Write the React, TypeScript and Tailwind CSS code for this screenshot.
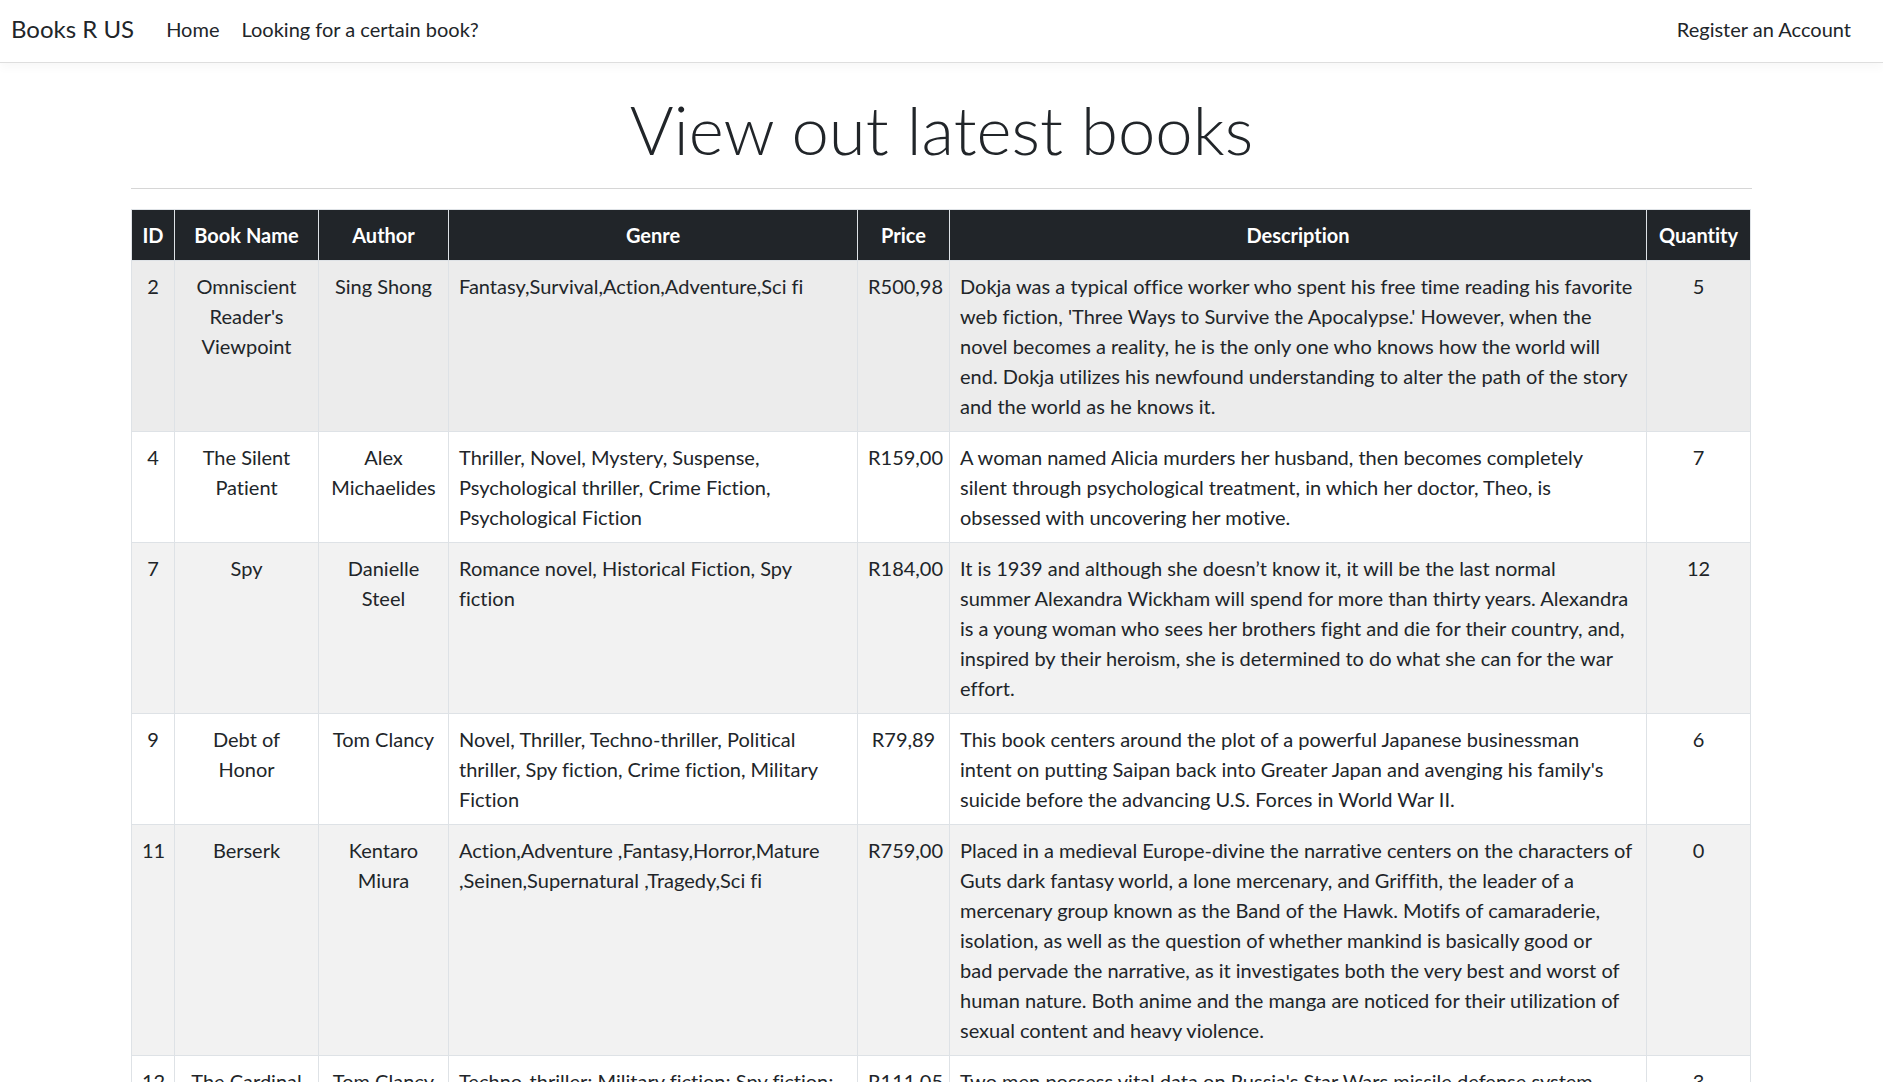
import React from "react";

interface Book {
  id: number;
  name: string[];
  author: string[];
  genre: string[];
  price: string;
  description: string[];
  quantity: number;
}

const books: Book[] = [
  {
    id: 2,
    name: ["Omniscient", "Reader's", "Viewpoint"],
    author: ["Sing Shong"],
    genre: ["Fantasy,Survival,Action,Adventure,Sci fi"],
    price: "R500,98",
    description: [
      "Dokja was a typical office worker who spent his free time reading his favorite",
      "web fiction, 'Three Ways to Survive the Apocalypse.' However, when the",
      "novel becomes a reality, he is the only one who knows how the world will",
      "end. Dokja utilizes his newfound understanding to alter the path of the story",
      "and the world as he knows it.",
    ],
    quantity: 5,
  },
  {
    id: 4,
    name: ["The Silent", "Patient"],
    author: ["Alex", "Michaelides"],
    genre: ["Thriller, Novel, Mystery, Suspense,", "Psychological thriller, Crime Fiction,", "Psychological Fiction"],
    price: "R159,00",
    description: [
      "A woman named Alicia murders her husband, then becomes completely",
      "silent through psychological treatment, in which her doctor, Theo, is",
      "obsessed with uncovering her motive.",
    ],
    quantity: 7,
  },
  {
    id: 7,
    name: ["Spy"],
    author: ["Danielle", "Steel"],
    genre: ["Romance novel, Historical Fiction, Spy", "fiction"],
    price: "R184,00",
    description: [
      "It is 1939 and although she doesn\u2019t know it, it will be the last normal",
      "summer Alexandra Wickham will spend for more than thirty years. Alexandra",
      "is a young woman who sees her brothers fight and die for their country, and,",
      "inspired by their heroism, she is determined to do what she can for the war",
      "effort.",
    ],
    quantity: 12,
  },
  {
    id: 9,
    name: ["Debt of", "Honor"],
    author: ["Tom Clancy"],
    genre: ["Novel, Thriller, Techno-thriller, Political", "thriller, Spy fiction, Crime fiction, Military", "Fiction"],
    price: "R79,89",
    description: [
      "This book centers around the plot of a powerful Japanese businessman",
      "intent on putting Saipan back into Greater Japan and avenging his family's",
      "suicide before the advancing U.S. Forces in World War II.",
    ],
    quantity: 6,
  },
  {
    id: 11,
    name: ["Berserk"],
    author: ["Kentaro", "Miura"],
    genre: ["Action,Adventure ,Fantasy,Horror,Mature", ",Seinen,Supernatural ,Tragedy,Sci fi"],
    price: "R759,00",
    description: [
      "Placed in a medieval Europe-divine the narrative centers on the characters of",
      "Guts dark fantasy world, a lone mercenary, and Griffith, the leader of a",
      "mercenary group known as the Band of the Hawk. Motifs of camaraderie,",
      "isolation, as well as the question of whether mankind is basically good or",
      "bad pervade the narrative, as it investigates both the very best and worst of",
      "human nature. Both anime and the manga are noticed for their utilization of",
      "sexual content and heavy violence.",
    ],
    quantity: 0,
  },
  {
    id: 12,
    name: ["The Cardinal", "of the", "Kremlin"],
    author: ["Tom Clancy"],
    genre: ["Techno-thriller; Military fiction; Spy fiction;", "Political thriller"],
    price: "R111,05",
    description: [
      "Two men possess vital data on Russia's Star Wars missile defense system,",
      "and the CIA must get them out before the KGB closes in.",
    ],
    quantity: 3,
  },
];

function Lines({ lines }: { lines: string[] }) {
  return (
    <>
      {lines.map((l, i) => (
        <span key={i} className="block whitespace-nowrap">
          {l}
        </span>
      ))}
    </>
  );
}

export default function App() {
  const td = "border border-[#dee2e6] px-[10px] py-[10px] align-top";
  const th = "border border-[#dee2e6] px-[8px] py-[10px] font-bold text-center";

  return (
    <div className="min-h-screen bg-white text-[#212529] font-['Lato','Liberation_Sans',sans-serif] text-[20px] leading-[30px] [font-variant-ligatures:none]">
      <nav className="h-[63px] flex items-center px-[11px] pb-[4px] border-b border-[#dedede] bg-white shadow-[0_4px_10px_rgba(0,0,0,0.035)]">
        <a className="text-[24px] leading-[36px] mr-[32px]">Books R US</a>
        <div className="flex gap-[22px]">
          <a>Home</a>
          <a>Looking for a certain book?</a>
        </div>
        <a className="ml-auto mr-[21px]">Register an Account</a>
      </nav>

      <main className="px-[131px]">
        <h1 className="mt-[26px] text-center text-[67px] leading-[80px] font-light">View out latest books</h1>
        <hr className="mt-[19px] border-t border-[#d6d6d6]" />

        <table className="mt-[20px] w-[1619px] table-fixed border-collapse border border-[#dee2e6]">
          <colgroup>
            <col className="w-[43px]" />
            <col className="w-[144px]" />
            <col className="w-[130px]" />
            <col className="w-[409px]" />
            <col className="w-[92px]" />
            <col className="w-[697px]" />
            <col className="w-[104px]" />
          </colgroup>
          <thead className="bg-[#212529] text-white">
            <tr>
              <th className={th}>ID</th>
              <th className={th}>Book Name</th>
              <th className={th}>Author</th>
              <th className={th}>Genre</th>
              <th className={th}>Price</th>
              <th className={th}>Description</th>
              <th className={th}>Quantity</th>
            </tr>
          </thead>
          <tbody>
            {books.map((b, i) => (
              <tr key={b.id} className={i === 0 ? "bg-[#ececec]" : i % 2 === 0 ? "bg-[#f2f2f2]" : "bg-white"}>
                <td className={`${td} text-center`}>{b.id}</td>
                <td className={`${td} text-center`}>
                  <Lines lines={b.name} />
                </td>
                <td className={`${td} text-center`}>
                  <Lines lines={b.author} />
                </td>
                <td className={td}>
                  <Lines lines={b.genre} />
                </td>
                <td className={`${td} text-center`}>{b.price}</td>
                <td className={td}>
                  <Lines lines={b.description} />
                </td>
                <td className={`${td} text-center`}>{b.quantity}</td>
              </tr>
            ))}
          </tbody>
        </table>
      </main>
    </div>
  );
}
